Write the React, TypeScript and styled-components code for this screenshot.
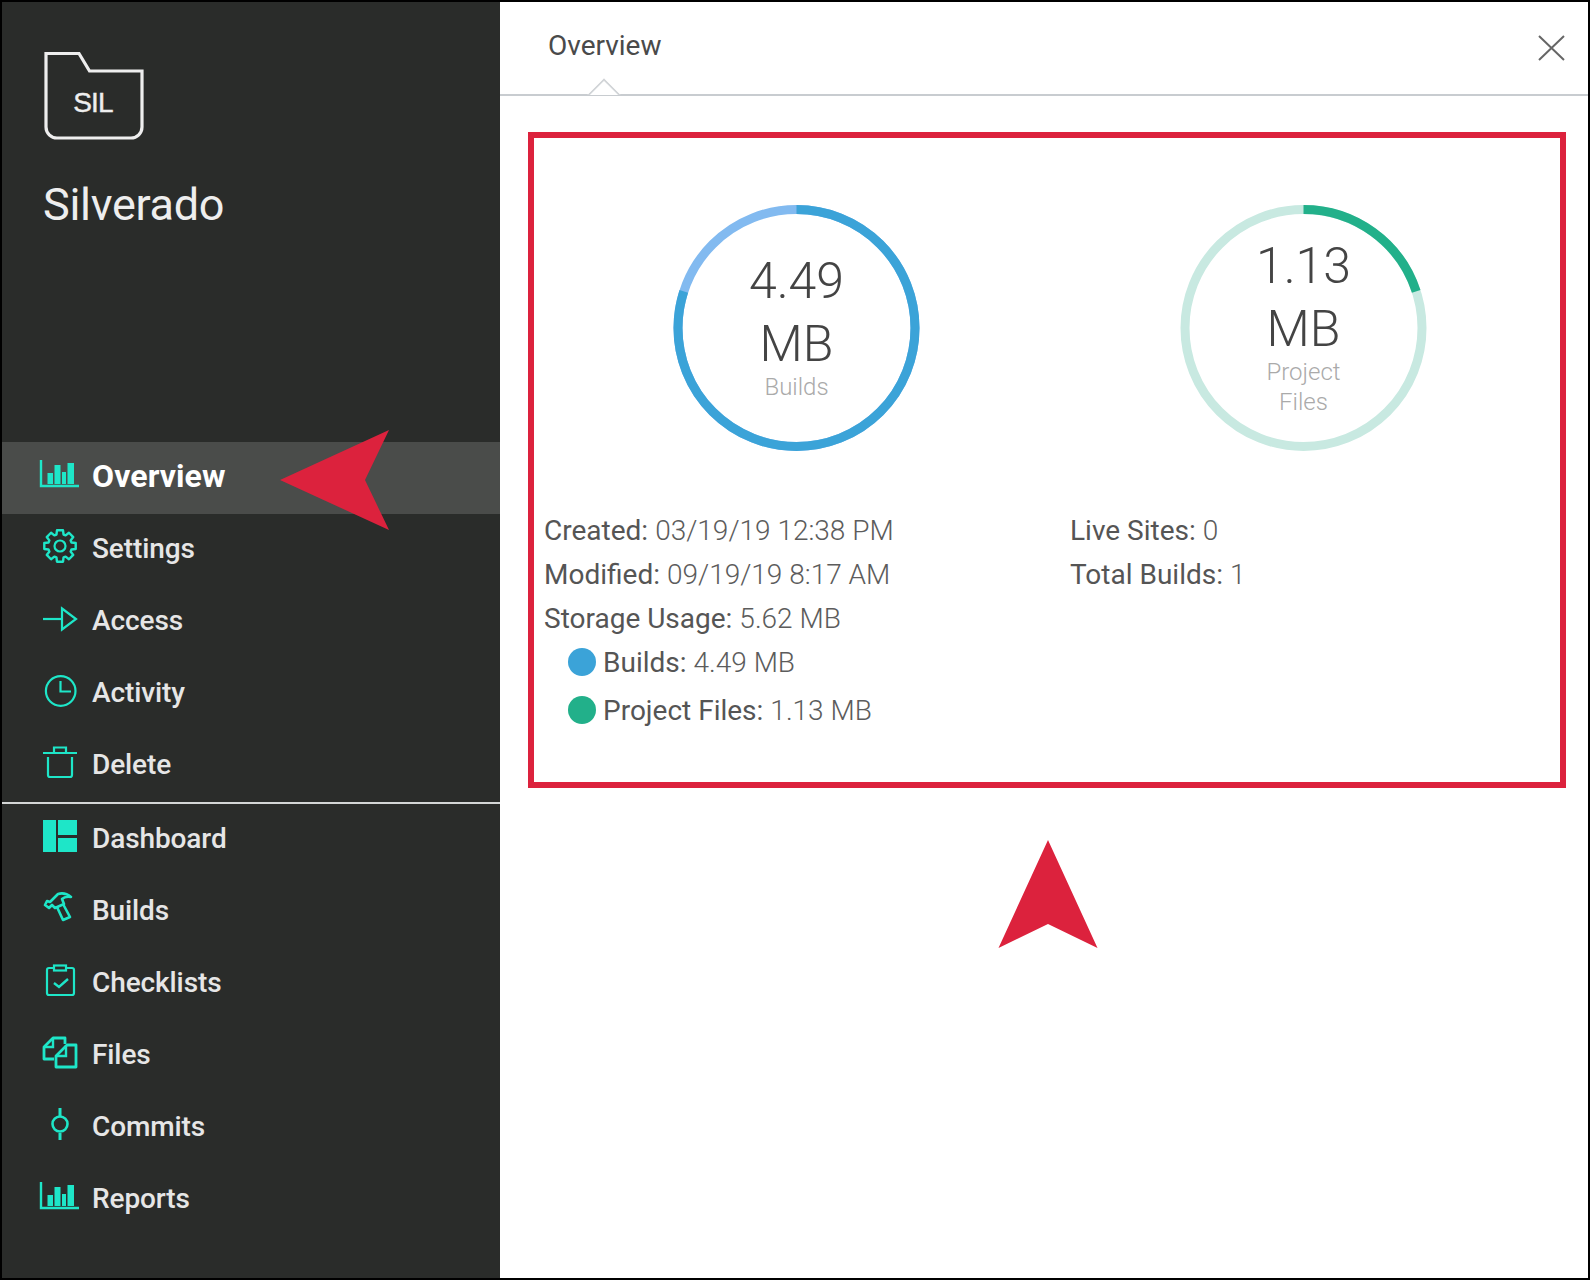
import React from "react";
import styled, { createGlobalStyle } from "styled-components";

const TEAL = "#1ee6c8";
const RED = "#dc223d";

const GlobalStyle = createGlobalStyle`
  html, body {
    margin: 0;
    padding: 0;
    background: #000;
  }
  * {
    box-sizing: border-box;
  }
`;

const Frame = styled.div`
  position: relative;
  width: 1590px;
  height: 1280px;
  display: flex;
  border: 2px solid #000;
  background: #fff;
  font-family: Roboto, "Liberation Sans", sans-serif;
`;

const Sidebar = styled.aside`
  width: 498px;
  flex: none;
  display: flex;
  flex-direction: column;
  background: #2a2c2a;
`;

const Brand = styled.div`
  height: 440px;
  padding: 48px 0 0 42px;
  color: #eee;
`;

const FolderBox = styled.div`
  position: relative;
  width: 100px;
  height: 91px;
`;

const FolderLabel = styled.span`
  position: absolute;
  left: 0;
  right: 2px;
  bottom: 22px;
  text-align: center;
  font-family: "Liberation Sans", Arial, sans-serif;
  font-size: 28px;
  line-height: 32px;
  letter-spacing: -0.8px;
  -webkit-text-stroke: 0.4px #eee;
`;

const BrandName = styled.h1`
  margin: 37px 0 0 -1px;
  font-size: 45px;
  line-height: 54px;
  font-weight: 400;
  letter-spacing: -0.3px;
`;

const NavRow = styled.div<{ $active?: boolean }>`
  height: 72px;
  display: flex;
  align-items: center;
  gap: 10px;
  padding-left: 36px;
  background: ${(p) => (p.$active ? "#4a4c4a" : "transparent")};
  color: ${(p) => (p.$active ? "#fff" : "#e6e6e6")};
  font-size: ${(p) => (p.$active ? 32 : 28)}px;
  font-weight: ${(p) => (p.$active ? 700 : 500)};
  letter-spacing: ${(p) => (p.$active ? 0.1 : -0.1)}px;
`;

const NavText = styled.span`
  position: relative;
  top: -2px;
`;

const Divider = styled.hr`
  margin: 0;
  height: 2px;
  border: 0;
  background: #d4d6d6;
`;

const NavIcon = styled.svg`
  width: 44px;
  height: 44px;
  flex: none;
  fill: none;
  stroke: ${TEAL};
  stroke-width: 2.2;
`;

const Main = styled.main`
  flex: 1;
  display: flex;
  flex-direction: column;
`;

const Header = styled.header`
  position: relative;
  height: 94px;
  flex: none;
  display: flex;
  align-items: flex-start;
  justify-content: space-between;
  padding: 26px 23px 0 48px;
  border-bottom: 2px solid #c8ccd0;
  &::after {
    content: "";
    position: absolute;
    left: 92px;
    bottom: -2px;
    width: 22px;
    height: 22px;
    background: #fff;
    border-top: 2px solid #d2d5d8;
    border-left: 2px solid #d2d5d8;
    transform: translateY(11px) rotate(45deg);
    clip-path: polygon(0 0, 100% 0, 0 100%);
  }
`;

const TabTitle = styled.span`
  font-size: 28px;
  line-height: 36px;
  font-weight: 400;
  color: #4a4a4a;
`;

const CloseIcon = styled.svg`
  width: 27px;
  height: 26px;
  margin-top: 7px;
  stroke: #666;
  stroke-width: 2;
  fill: none;
`;

const Panel = styled.section`
  margin: 36px 22px 0 28px;
  height: 656px;
  border: 6px solid ${RED};
`;

const Charts = styled.div`
  display: grid;
  grid-template-columns: 507px 507px;
  padding: 66px 0 0 9px;
`;

const ChartCell = styled.div`
  display: flex;
  justify-content: center;
`;

const Ring = styled.div`
  position: relative;
  width: 247px;
  height: 247px;
  display: flex;
  flex-direction: column;
  align-items: center;
  justify-content: center;
  padding: 0 66px 4px;
  text-align: center;
`;

const RingSvg = styled.svg`
  position: absolute;
  inset: 0;
  transform: rotate(-90deg);
`;

const RingValue = styled.div`
  font-size: 50px;
  line-height: 63px;
  font-weight: 300;
  color: #444;
`;

const RingLabel = styled.div`
  margin-top: -4px;
  font-size: 24px;
  line-height: 30px;
  font-weight: 300;
  color: #aaa;
`;

const Info = styled.div`
  display: grid;
  grid-template-columns: 526px 1fr;
  padding: 57px 0 0 10px;
`;

const InfoRow = styled.div`
  height: 44px;
  display: flex;
  align-items: center;
  font-size: 28px;
  font-weight: 400;
  color: #555;
`;

const Value = styled.span`
  font-weight: 300;
  margin-left: 7px;
  color: #5c5c5c;
`;

const LegendRow = styled(InfoRow)`
  padding-left: 24px;
  gap: 7px;
  margin-bottom: 4px;
`;

const Dot = styled.span<{ $color: string }>`
  width: 28px;
  height: 28px;
  border-radius: 50%;
  background: ${(p) => p.$color};
`;

const Pointer = styled.svg<{ $left: number; $top: number }>`
  position: absolute;
  left: ${(p) => p.$left}px;
  top: ${(p) => p.$top}px;
  fill: ${RED};
`;

// outlined gear with 8 teeth, center 22,18 in the 44 box
const gearPath = () => {
  const pts: string[] = [];
  for (let i = 0; i < 8; i++) {
    const a = (i * Math.PI) / 4 - Math.PI / 2;
    const spots: [number, number][] = [
      [12, -0.3],
      [16, -0.19],
      [16, 0.19],
      [12, 0.3],
    ];
    spots.forEach(([r, d]) => {
      pts.push(`${(22 + r * Math.cos(a + d)).toFixed(2)} ${(18 + r * Math.sin(a + d)).toFixed(2)}`);
    });
  }
  return `M${pts.join("L")}Z`;
};

const BarsIcon = () => (
  <NavIcon viewBox="0 0 44 44">
    <path d="M3 4V30H41" strokeWidth="2.4" />
    <g fill={TEAL} stroke="none">
      <rect x="9.5" y="17" width="5.5" height="11" />
      <rect x="16.5" y="9" width="6" height="19" />
      <rect x="24" y="16" width="4" height="12" />
      <rect x="29.5" y="7" width="6.5" height="21" />
    </g>
  </NavIcon>
);

const GearIcon = () => (
  <NavIcon viewBox="0 0 44 44">
    <path d={gearPath()} strokeWidth="2.4" strokeLinejoin="round" />
    <circle cx="22" cy="18" r="5.5" />
  </NavIcon>
);

const AccessIcon = () => (
  <NavIcon viewBox="0 0 44 44">
    <path d="M5 19H24" />
    <path d="M24 8.5L38 19L24 29.5Z" />
  </NavIcon>
);

const ClockIcon = () => (
  <NavIcon viewBox="0 0 44 44">
    <circle cx="22.7" cy="19" r="14.8" />
    <path d="M22.5 9V19.5H33" />
  </NavIcon>
);

const TrashIcon = () => (
  <NavIcon viewBox="0 0 44 44">
    <path d="M5 9H39" />
    <path d="M16 9V3.5H28V9" />
    <path d="M10 13V31a2 2 0 0 0 2 2H32a2 2 0 0 0 2-2V13" />
  </NavIcon>
);

const DashboardIcon = () => (
  <NavIcon viewBox="0 0 44 44">
    <g fill={TEAL} stroke="none">
      <rect x="5" y="2" width="13" height="32" />
      <rect x="20" y="2" width="19" height="15" />
      <rect x="20" y="20" width="19" height="14" />
    </g>
  </NavIcon>
);

const HammerIcon = () => (
  <NavIcon viewBox="0 0 44 44">
    <path
      d="M7 15L9 11L12 12L20 4Q27 2 33 7Q27 6 24 9L26 14L17 18L14 15L11 18Z"
      strokeWidth="2.6"
      strokeLinejoin="round"
    />
    <path d="M19 17L25 30L32 27L25 14" strokeWidth="2.6" strokeLinejoin="round" />
  </NavIcon>
);

const ChecklistIcon = () => (
  <NavIcon viewBox="0 0 44 44">
    <path d="M16 6H11a2 2 0 0 0-2 2V31a2 2 0 0 0 2 2H34a2 2 0 0 0 2-2V8a2 2 0 0 0-2-2H28" />
    <rect x="16" y="3.5" width="12" height="5" />
    <path d="M16 21L21 25L30 17" strokeWidth="2.4" />
  </NavIcon>
);

const FilesIcon = () => (
  <NavIcon viewBox="0 0 44 44">
    <path d="M16 25H6V13L15 4H27V10" strokeWidth="2.8" strokeLinejoin="round" />
    <path d="M15 4V13H6" strokeWidth="2.4" />
    <path d="M18 33V22L29 11H38V33Z" strokeWidth="2.8" strokeLinejoin="round" />
    <path d="M28 11V22H18" strokeWidth="2.4" />
  </NavIcon>
);

const CommitIcon = () => (
  <NavIcon viewBox="0 0 44 44">
    <circle cx="22" cy="18" r="7.5" strokeWidth="2.6" />
    <path d="M22 2V10M22 27V34" strokeWidth="3" />
  </NavIcon>
);

const RingChart = ({ share, color, rest, value, unit, label }: {
  share: number;
  color: string;
  rest: string;
  value: string;
  unit: string;
  label: string;
}) => (
  <Ring>
    <RingSvg width="247" height="247" viewBox="0 0 247 247" fill="none" strokeWidth="9">
      <circle cx="123" cy="123.5" r="118.5" stroke={rest} />
      <circle
        cx="123"
        cy="123.5"
        r="118.5"
        stroke={color}
        pathLength={100}
        strokeDasharray={`${share} ${100 - share}`}
      />
    </RingSvg>
    <RingValue>{value}</RingValue>
    <RingValue>{unit}</RingValue>
    <RingLabel>{label}</RingLabel>
  </Ring>
);

const topNav = [
  { name: "Overview", icon: <BarsIcon />, active: true },
  { name: "Settings", icon: <GearIcon /> },
  { name: "Access", icon: <AccessIcon /> },
  { name: "Activity", icon: <ClockIcon /> },
  { name: "Delete", icon: <TrashIcon /> },
];

const bottomNav = [
  { name: "Dashboard", icon: <DashboardIcon /> },
  { name: "Builds", icon: <HammerIcon /> },
  { name: "Checklists", icon: <ChecklistIcon /> },
  { name: "Files", icon: <FilesIcon /> },
  { name: "Commits", icon: <CommitIcon /> },
  { name: "Reports", icon: <BarsIcon /> },
];

export default function App() {
  return (
    <>
      <GlobalStyle />
      <Frame>
        <Sidebar>
          <Brand>
            <FolderBox>
              <svg width="100" height="91" viewBox="0 0 100 91" fill="none" stroke="#eee" strokeWidth="3.2">
                <path d="M2 3.5H35L45.5 21H98V77a11 11 0 0 1-11 11H13a11 11 0 0 1-11-11Z" />
              </svg>
              <FolderLabel>SIL</FolderLabel>
            </FolderBox>
            <BrandName>Silverado</BrandName>
          </Brand>
          {topNav.map((item) => (
            <NavRow key={item.name} $active={item.active}>
              {item.icon}
              <NavText>{item.name}</NavText>
            </NavRow>
          ))}
          <Divider />
          {bottomNav.map((item) => (
            <NavRow key={item.name}>
              {item.icon}
              <NavText>{item.name}</NavText>
            </NavRow>
          ))}
        </Sidebar>
        <Main>
          <Header>
            <TabTitle>Overview</TabTitle>
            <CloseIcon viewBox="0 0 27 26">
              <path d="M1 1L26 25M26 1L1 25" />
            </CloseIcon>
          </Header>
          <Panel>
            <Charts>
              <ChartCell>
                <RingChart share={80} color="#3ba3d8" rest="#82baf0" value="4.49" unit="MB" label="Builds" />
              </ChartCell>
              <ChartCell>
                <RingChart share={20} color="#22b08a" rest="#c8e9e1" value="1.13" unit="MB" label="Project Files" />
              </ChartCell>
            </Charts>
            <Info>
              <div>
                <InfoRow>Created:<Value>03/19/19 12:38 PM</Value></InfoRow>
                <InfoRow>Modified:<Value>09/19/19 8:17 AM</Value></InfoRow>
                <InfoRow>Storage Usage:<Value>5.62 MB</Value></InfoRow>
                <LegendRow><Dot $color="#3ba3d8" /><span>Builds:<Value>4.49 MB</Value></span></LegendRow>
                <LegendRow><Dot $color="#22b08a" /><span>Project Files:<Value>1.13 MB</Value></span></LegendRow>
              </div>
              <div>
                <InfoRow>Live Sites:<Value>0</Value></InfoRow>
                <InfoRow>Total Builds:<Value>1</Value></InfoRow>
              </div>
            </Info>
          </Panel>
        </Main>
        <Pointer $left={278} $top={428} width="110" height="100" viewBox="0 0 110 100">
          <path d="M0 50L109 0L85 50L109 100Z" />
        </Pointer>
        <Pointer $left={996} $top={838} width="100" height="110" viewBox="0 0 100 110">
          <path d="M50 0L99.5 108L50 84L0.5 108Z" />
        </Pointer>
      </Frame>
    </>
  );
}
